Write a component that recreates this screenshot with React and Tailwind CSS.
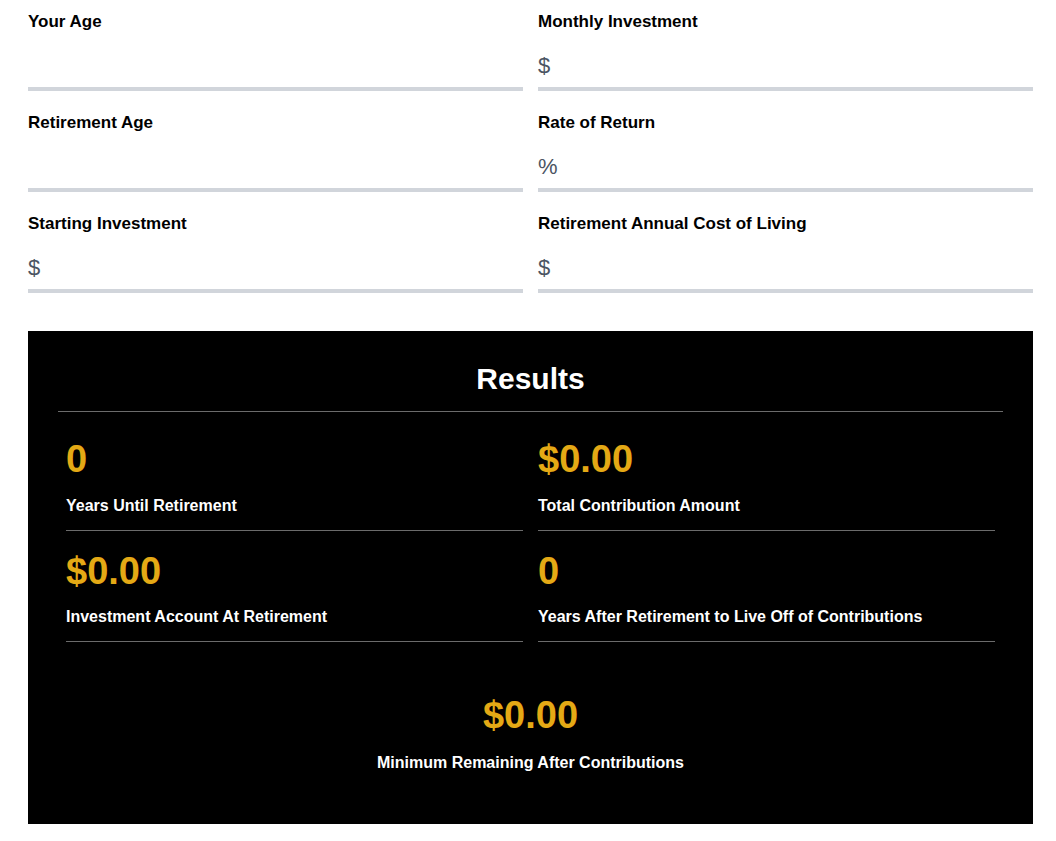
import React from "react";

const fields = [
  { label: "Your Age", prefix: "" },
  { label: "Monthly Investment", prefix: "$" },
  { label: "Retirement Age", prefix: "" },
  { label: "Rate of Return", prefix: "%" },
  { label: "Starting Investment", prefix: "$" },
  { label: "Retirement Annual Cost of Living", prefix: "$" },
];

function Field({ label, prefix }) {
  return (
    <div className="flex flex-col h-[82px]">
      <label className="text-[17px] leading-[26px] font-bold text-black">{label}</label>
      <div className="flex items-end h-[56px] border-b-4 border-[#d1d5db] pt-[14px] pb-[5px]">
        <span className="text-[22px] leading-[33px] text-[#4b5563]">{prefix}</span>
        <input className="flex-1 min-w-0 bg-transparent outline-none text-[22px] leading-[33px]" />
      </div>
    </div>
  );
}

function Stat({ value, label }) {
  return (
    <div className="pt-[18px] pb-[12px] border-b border-[#6b6b6b]">
      <div className="text-[38px] leading-[45.6px] font-bold text-[#e4a915]">{value}</div>
      <div className="mt-[11px] text-[16px] leading-[24px] font-bold text-white">{label}</div>
    </div>
  );
}

export default function App() {
  return (
    <div className="bg-white min-h-[841px] pl-[28px] pr-[23px] pt-[9px] font-['Liberation_Sans',Arial,sans-serif]">
      <div className="grid grid-cols-2 gap-x-[15px] gap-y-[19px]">
        {fields.map((f) => (
          <Field key={f.label} {...f} />
        ))}
      </div>
      <div className="mt-[38px] bg-black px-[30px] pt-[30px] pb-[49px]">
        <h2 className="text-center text-[30px] leading-[36px] font-bold text-white">Results</h2>
        <div className="mt-[14px] h-px bg-[#6b6b6b]" />
        <div className="mt-[7px] px-[8px] grid grid-cols-2 gap-x-[15px]">
          <Stat value="0" label="Years Until Retirement" />
          <Stat value="$0.00" label="Total Contribution Amount" />
          <Stat value="$0.00" label="Investment Account At Retirement" />
          <Stat value="0" label="Years After Retirement to Live Off of Contributions" />
        </div>
        <div className="mt-[51px] text-center">
          <div className="text-[38px] leading-[45.6px] font-bold text-[#e4a915]">$0.00</div>
          <div className="mt-[12px] text-[16px] leading-[24px] font-bold text-white">
            Minimum Remaining After Contributions
          </div>
        </div>
      </div>
    </div>
  );
}
